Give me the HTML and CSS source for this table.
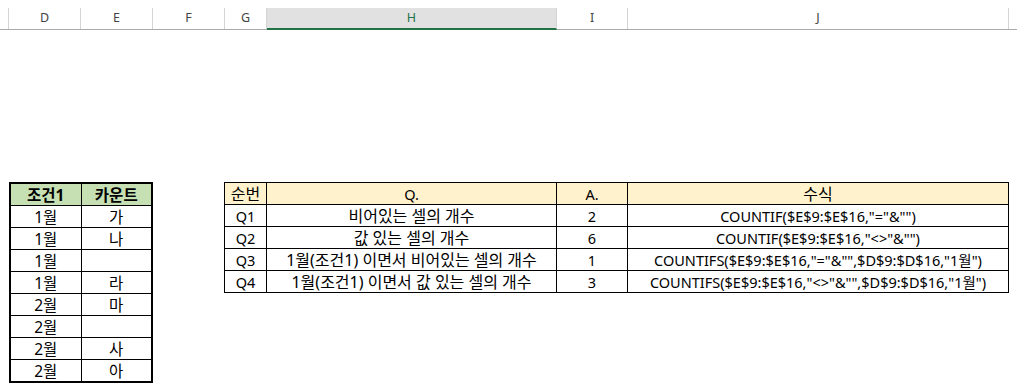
FILE: index.html
```html
<!DOCTYPE html>
<html lang="ko">
<head>
<meta charset="utf-8">
<link rel="stylesheet" href="styles.css">
</head>
<body>
<div class="colbar">
  <div class="gutter"></div>
  <div class="ch w-d">D</div>
  <div class="ch w-e">E</div>
  <div class="ch w-f">F</div>
  <div class="ch w-g">G</div>
  <div class="ch w-h sel">H</div>
  <div class="ch w-i">I</div>
  <div class="ch w-j">J</div>
  <div class="rest"></div>
</div>
<div class="sheet">
  <table class="left">
    <colgroup><col class="lc"><col class="lc"></colgroup>
    <tr class="head"><th>조건1</th><th>카운트</th></tr>
    <tr><td>1월</td><td>가</td></tr>
    <tr><td>1월</td><td>나</td></tr>
    <tr><td>1월</td><td></td></tr>
    <tr><td>1월</td><td>라</td></tr>
    <tr><td>2월</td><td>마</td></tr>
    <tr><td>2월</td><td></td></tr>
    <tr><td>2월</td><td>사</td></tr>
    <tr><td>2월</td><td>아</td></tr>
  </table>
  <table class="right">
    <colgroup><col class="c1"><col class="c2"><col class="c3"><col class="c4"></colgroup>
    <tr class="head"><td class="ko">순번</td><td>Q.</td><td>A.</td><td class="ko">수식</td></tr>
    <tr><td>Q1</td><td class="ko">비어있는 셀의 개수</td><td>2</td><td>COUNTIF($E$9:$E$16,"="&amp;"")</td></tr>
    <tr><td>Q2</td><td class="ko">값 있는 셀의 개수</td><td>6</td><td>COUNTIF($E$9:$E$16,"&lt;&gt;"&amp;"")</td></tr>
    <tr><td>Q3</td><td class="ko">1월(조건1) 이면서 비어있는 셀의 개수</td><td>1</td><td>COUNTIFS($E$9:$E$16,"="&amp;"",$D$9:$D$16,"1월")</td></tr>
    <tr><td>Q4</td><td class="ko">1월(조건1) 이면서 값 있는 셀의 개수</td><td>3</td><td>COUNTIFS($E$9:$E$16,"&lt;&gt;"&amp;"",$D$9:$D$16,"1월")</td></tr>
  </table>
</div>
</body>
</html>
```
FILE: styles.css
```css
html, body {
  margin: 0;
  padding: 0;
  background: #ffffff;
}
body {
  font-family: "Noto Sans", "Noto Sans CJK KR", sans-serif;
  color: #000;
}
.colbar {
  display: flex;
  margin-top: 8px;
  height: 21px;
  border-bottom: 1px solid #ababab;
  font-size: 12.5px;
  color: #444;
}
.gutter {
  width: 9px;
  border-right: 1px solid #d4d4d4;
  box-sizing: border-box;
}
.ch {
  box-sizing: border-box;
  border-right: 1px solid #d4d4d4;
  display: flex;
  align-items: center;
  justify-content: center;
  line-height: 1;
}
.rest { flex: 1; }
.w-d, .w-e, .w-f { width: 72px; }
.w-g { width: 42px; }
.w-h { width: 290px; }
.w-i { width: 71px; }
.w-j { width: 381px; }
.sel {
  background: #e1e1e1;
  color: #217346;
  border-bottom: 2px solid #217346;
  margin-bottom: -1px;
}
.sheet {
  display: flex;
  align-items: flex-start;
  gap: 71px;
  padding-top: 152px;
  padding-left: 9px;
}
table {
  border-collapse: collapse;
  font-size: 14.5px;
  table-layout: fixed;
}
td, th {
  border: 1px solid #000;
  height: 21px;
  padding: 0;
  text-align: center;
  line-height: 20px;
  white-space: nowrap;
  overflow: hidden;
}
.left {
  width: 142px;
  border: 2px solid #000;
  font-size: 15.5px;
}
.lc { width: 71px; }
.left th {
  font-weight: bold;
}
.left .head th { background: #c6e0b4; }
.right {
  width: 784px;
}
.right .head td { background: #fff2cc; }
.right .ko { font-size: 16px; }
.c1 { width: 42px; }
.c2 { width: 290px; }
.c3 { width: 71px; }
.c4 { width: 381px; }
```
